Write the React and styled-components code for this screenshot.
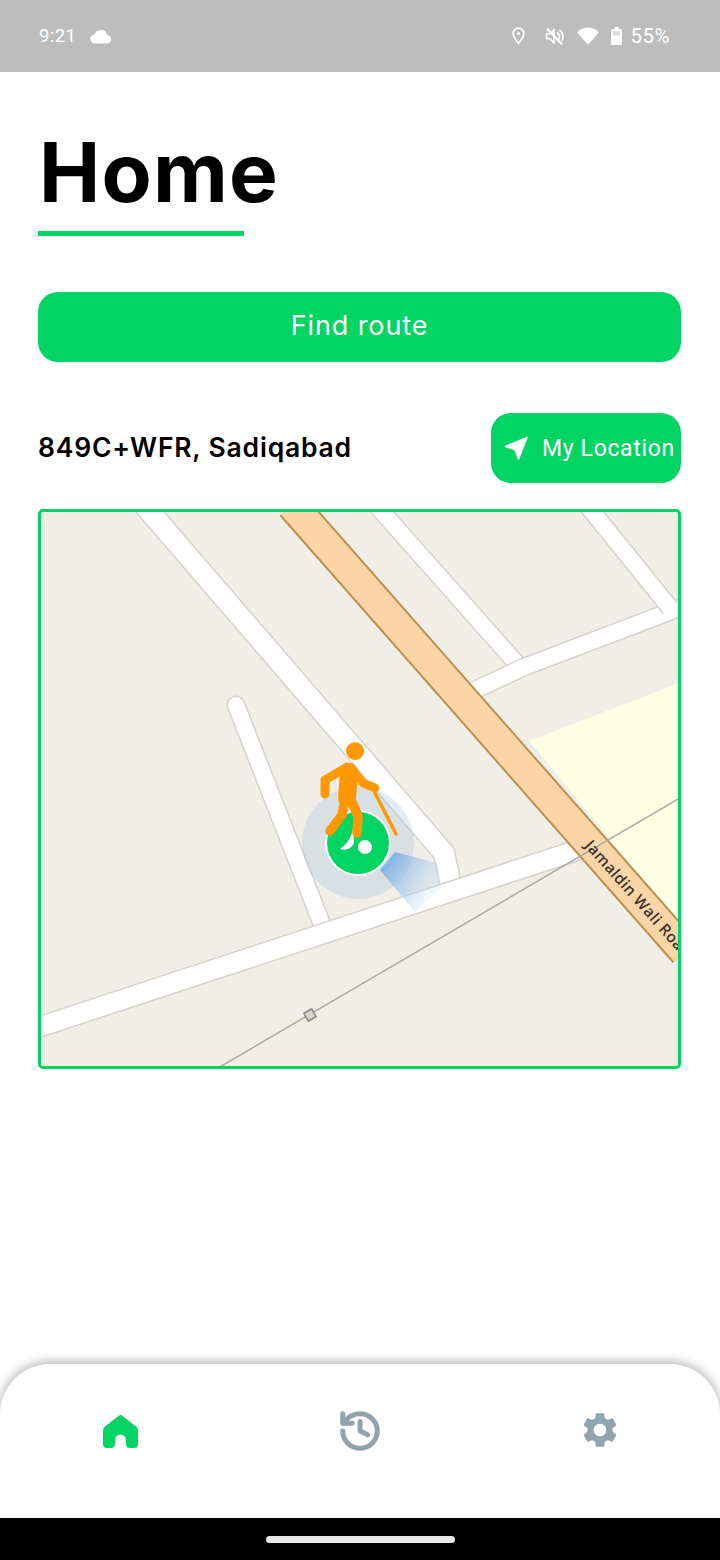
import React from "react";
import styled, { createGlobalStyle } from "styled-components";
import { History } from "lucide-react";
import { MdSettings } from "react-icons/md";

const GREEN = "#00d563";

const Global = createGlobalStyle`
  html, body { margin: 0; padding: 0; background: #fff; }
  * { box-sizing: border-box; }
`;
const Screen = styled.div`
  width: 720px; height: 1560px; display: flex; flex-direction: column; overflow: hidden;
  background: #fff; font-family: Inter, "Liberation Sans", sans-serif;
`;
const StatusBar = styled.header`
  height: 72px; flex: none; background: #bdbdbd; color: #fff; display: flex; align-items: center;
  justify-content: space-between; padding: 0 50px 0 39px;
  font-family: Roboto, sans-serif; font-size: 18.5px; letter-spacing: .4px;
`;
const StatusGroup = styled.div`display: flex; align-items: center; gap: ${p => p.$gap}px;`;
const Percent = styled.span`font-size: 20.5px; letter-spacing: .5px;`;
const Main = styled.main`flex: 1; padding: 55px 39px 0 38px; display: flex; flex-direction: column;`;
const Title = styled.h1`
  margin: 0 0 0 1px; font-size: 82px; line-height: 92px; font-weight: 700; color: #000; letter-spacing: 1.2px;
`;
const Underline = styled.div`width: 206px; height: 5px; background: ${GREEN}; margin-top: 12px;`;
const FindButton = styled.button`
  height: 70px; margin-top: 56px; width: 100%; border: 0; border-radius: 20px; background: ${GREEN}; color: #fff;
  font-family: Inter, sans-serif; font-size: 27px; font-weight: 400; letter-spacing: .9px; padding: 0 0 3px;
`;
const LocationRow = styled.div`display: flex; justify-content: space-between; align-items: center; margin-top: 51px; height: 70px;`;
const Address = styled.div`font-size: 26.5px; font-weight: 600; color: #000; letter-spacing: .8px; padding-bottom: 2px;`;
const LocationButton = styled.button`
  width: 190px; height: 70px; border: 0; border-radius: 20px; background: ${GREEN}; color: #fff;
  display: flex; align-items: center; gap: 14px; padding: 0 0 0 13px;
  font-family: Roboto, sans-serif; font-size: 23px; letter-spacing: .65px; white-space: nowrap;
`;
const MapFrame = styled.div`
  margin-top: 26px; height: 560px; border: 3px solid ${GREEN}; border-radius: 5px; overflow: hidden; background: #f1eee8;
  svg { display: block; }
`;
const BottomNav = styled.nav`
  height: 154px; flex: none; background: #fff; border-radius: 50px 50px 0 0; box-shadow: 0 -2px 11px rgba(0,0,0,.32);
  display: grid; grid-template-columns: repeat(3, 1fr); position: relative;
`;
const NavItem = styled.div`display: flex; justify-content: center; padding-top: ${p => p.$top}px; color: ${p => p.$active ? GREEN : "#90a4ae"};`;
const SystemBar = styled.div`height: 42px; flex: none; background: #000; display: flex; align-items: center; justify-content: center; position: relative;`;
const Pill = styled.div`width: 189px; height: 7px; border-radius: 4px; background: #e8e8e8;`;

const Cloud = () => (
  <svg width="22" height="15" viewBox="0 0 22 15" fill="#fff"><path d="M5 14.500a4.500 4.500 0 0 1-.6-9A7 7 0 0 1 11 1a6.800 6.800 0 0 1 6.400 5A4.300 4.300 0 0 1 17.500 14.500z" /></svg>
);
const Pin = () => (
  <svg width="13" height="18" viewBox="0 0 13 18" fill="none" stroke="#fff" strokeWidth="1.800"><path d="M6.500 16.500C3 12 1.200 9.300 1.200 6.500a5.300 5.300 0 0 1 10.600 0c0 2.800-1.800 5.500-5.300 10z" /><circle cx="6.500" cy="6.500" r="1.600" fill="#fff" stroke="none" /></svg>
);
const Mute = () => (
  <svg width="20" height="19" viewBox="0 0 20 19" fill="none" stroke="#fff" strokeWidth="1.700"><path d="M1.500 7v4.500h3L9 15.500V3L4.500 7z" /><path d="M12 5.500a6 6 0 0 1 1.500 7.500M14.500 3a9 9 0 0 1 2.500 11" /><path d="M2 1.500l15 16" strokeWidth="2.300" /></svg>
);
const Wifi = () => (
  <svg width="22" height="18" viewBox="0 0 22 18" fill="#fff"><path d="M11 17.500L0 5.500C3 2.200 7 .5 11 .5s8 1.700 11 5z" /></svg>
);
const Battery = () => (
  <svg width="11" height="18" viewBox="0 0 11 18" fill="#fff"><path d="M3.500 0h4v2H10a1 1 0 0 1 1 1v14a1 1 0 0 1-1 1H1a1 1 0 0 1-1-1V3a1 1 0 0 1 1-1h2.500z" /><rect x="2" y="4" width="7" height="4.500" fill="#bdbdbd" opacity=".5" /></svg>
);
const NearMe = () => (
  <svg width="24" height="24" viewBox="0 0 24 24" fill="#fff" stroke="#fff" strokeWidth="1.600" strokeLinejoin="round"><path d="M23 1.500L1.500 10.500l9.500 3 3.500 9.500z" /></svg>
);
const HomeIcon = () => (
  <svg width="35" height="33" viewBox="0 0 35 33" fill="currentColor"><path d="M15.500 1a3 3 0 0 1 4 0L33 11.500a5 5 0 0 1 2 4V29a4 4 0 0 1-4 4h-4a4 4 0 0 1-4-4V25a5.500 5.500 0 0 0-11 0V29a4 4 0 0 1-4 4H4a4 4 0 0 1-4-4V15.500a5 5 0 0 1 2-4z" /></svg>
);

const RoadEdge = "#d6d3cd";
const Road = ({ d, w, cap = "butt" }) => (
  <g fill="none" strokeLinejoin="round" strokeLinecap={cap}>
    <path d={d} stroke={RoadEdge} strokeWidth={w + 3} />
    <path d={d} stroke="#fff" strokeWidth={w} />
  </g>
);

const MapView = () => (
  <svg width="637" height="554" viewBox="41 512 637 554">
    <defs>
      <linearGradient id="cone" gradientUnits="userSpaceOnUse" x1="385" y1="862" x2="432" y2="892">
        <stop offset="0" stopColor="#78ade4" stopOpacity=".9" />
        <stop offset="1" stopColor="#b4d3f2" stopOpacity=".2" />
      </linearGradient>
      <filter id="soft"><feGaussianBlur stdDeviation=".6" /></filter>
    </defs>
    <rect x="41" y="512" width="637" height="554" fill="#f1eee8" />
    <path d="M527 742L681 682V925L530 742z" fill="#fefee2" filter="url(#soft)" />
    <g filter="url(#soft)">
      <Road d="M144 505L444 853L451 886" w={20} />
      <Road d="M236 705L325 932" w={16} cap="round" />
      <Road d="M36 1028L590 846" w={19} />
      <Road d="M376 505L518 665" w={16} />
      <Road d="M475 690L524 667L690 604" w={16} />
      <Road d="M587 505L670 608" w={16} />
    </g>
    <path d="M292 505L685 952" stroke="#b9914e" strokeWidth="33" fill="none" />
    <path d="M292 505L685 952" stroke="#fcd5a6" strokeWidth="29" fill="none" />
    <path d="M218 1068L685 795" stroke="#aaa9a6" strokeWidth="1.500" fill="none" />
    <g transform="translate(310 1015) rotate(-30)">
      <rect x="-4.500" y="-4.500" width="9" height="9" fill="#d6d4d0" stroke="#8b8a88" strokeWidth="1.500" />
    </g>
    <text
      transform="translate(584 846) rotate(48.500)"
      fontFamily="'Open Sans', sans-serif"
      fontSize="15.500"
      fontWeight="600"
      fill="#3a3430"
      letterSpacing=".4"
    >
      Jamaldin Wali Road
    </text>
    <circle cx="358" cy="843" r="56" fill="#a6c4dc" fillOpacity=".32" />
    <path d="M380 870L395 852L437 863L442 887L415 912z" fill="url(#cone)" />
    <circle cx="358" cy="843" r="33" fill="#fff" />
    <circle cx="358" cy="843" r="31" fill={GREEN} />
    <circle cx="365" cy="847" r="7" fill="#fff" />
    <path d="M353 829C351 838 346 845 340 849C347 851 352 848 354 843z" fill="#fff" />
    <g fill="none" stroke="#ff9800" strokeLinecap="round" strokeLinejoin="round">
      <circle cx="355" cy="751" r="9" fill="#ff9800" stroke="none" />
      <path d="M375 793L396 834" strokeWidth="3.500" />
      <path d="M325 794L325 780L347 767" strokeWidth="9" />
      <path d="M351 768L363 783L375 788" strokeWidth="8.500" />
      <path d="M349 772L347 798" strokeWidth="18" />
      <path d="M345 800L342 815L330 831" strokeWidth="9.500" />
      <path d="M351 800L358 816L357 833" strokeWidth="9.500" />
    </g>
  </svg>
);

export default function App() {
  return (
    <Screen>
      <Global />
      <StatusBar>
        <StatusGroup $gap={14}>
          <span>9:21</span>
          <Cloud />
        </StatusGroup>
        <StatusGroup $gap={20}>
          <Pin />
          <StatusGroup $gap={12}>
            <Mute />
            <Wifi />
            <StatusGroup $gap={8}>
              <Battery />
              <Percent>55%</Percent>
            </StatusGroup>
          </StatusGroup>
        </StatusGroup>
      </StatusBar>
      <Main>
        <Title>Home</Title>
        <Underline />
        <FindButton>Find route</FindButton>
        <LocationRow>
          <Address>849C+WFR, Sadiqabad</Address>
          <LocationButton>
            <NearMe />
            My Location
          </LocationButton>
        </LocationRow>
        <MapFrame>
          <MapView />
        </MapFrame>
      </Main>
      <BottomNav>
        <NavItem $active $top={51}><HomeIcon /></NavItem>
        <NavItem $top={44}><History size={46} strokeWidth={2.600} /></NavItem>
        <NavItem $top={45}><MdSettings size={42} /></NavItem>
      </BottomNav>
      <SystemBar><Pill /></SystemBar>
    </Screen>
  );
}
